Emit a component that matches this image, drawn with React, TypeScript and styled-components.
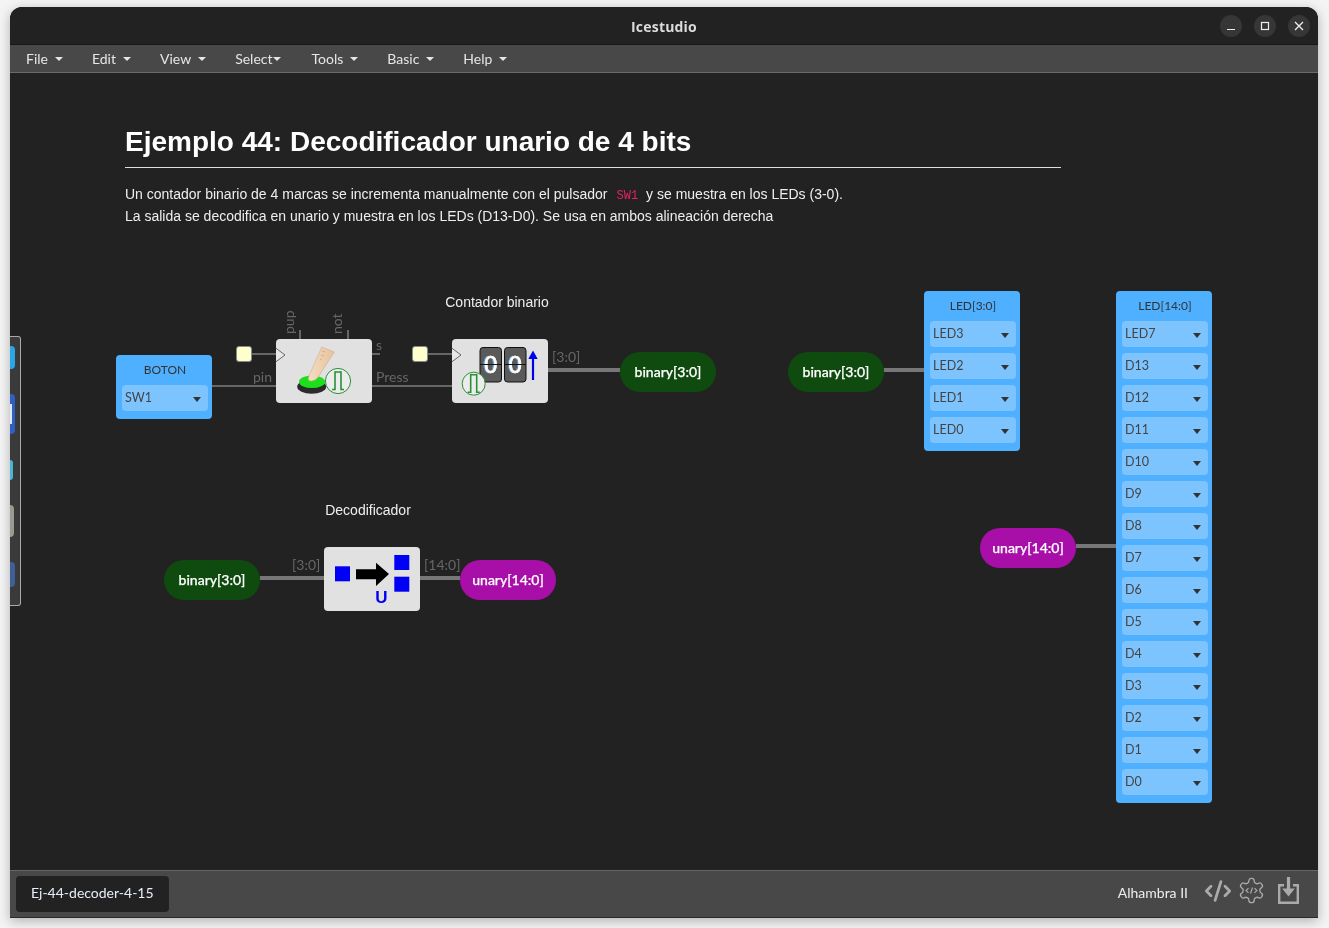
import styled, { createGlobalStyle } from 'styled-components';
import { CodeXml } from 'lucide-react';

const GlobalStyle = createGlobalStyle`
  html, body {
    margin: 0;
    padding: 0;
    background: #f4f4f4;
    overflow: hidden;
  }
  #root {
    width: 1329px;
    height: 928px;
  }
`;

const Win = styled.div`
  position: relative;
  margin: 7px 0 0 10px;
  width: 1308px;
  height: 911px;
  display: flex;
  flex-direction: column;
  background: #222;
  border-radius: 12px 12px 0 0;
  overflow: hidden;
`;

const WinShadow = styled.div`
  padding-top: 0.1px;
  filter: drop-shadow(0 3px 6px rgba(0, 0, 0, 0.28));
`;

const TitleBar = styled.div`
  height: 38px;
  flex-shrink: 0;
  position: relative;
  padding-top: 2px;
  display: flex;
  align-items: center;
  justify-content: center;
  background: #222;
  border-bottom: 1px solid #161616;
  box-sizing: border-box;
  color: #dcdcdc;
  letter-spacing: 0.2px;
  font: 700 14px 'Open Sans', 'Noto Sans', sans-serif;
`;

const WinButtons = styled.div`
  position: absolute;
  right: 8px;
  top: 8px;
  display: flex;
  gap: 12px;
`;

const WinButton = styled.div`
  width: 22px;
  height: 22px;
  border-radius: 50%;
  background: #363636;
  display: flex;
  align-items: center;
  justify-content: center;
`;

const MenuBar = styled.div`
  height: 28px;
  flex-shrink: 0;
  box-sizing: border-box;
  padding: 0 0 1px 16px;
  display: flex;
  align-items: center;
  gap: 29px;
  background: #484848;
  border-bottom: 1px solid #6a6a6a;
  color: #e6e6e6;
  font: 400 14px Lato, sans-serif;
`;

const MenuItem = styled.div<{ $tight?: boolean }>`
  display: flex;
  align-items: center;
  gap: ${(p) => (p.$tight ? '0' : '7px')};
  ${(p) => (p.$tight ? 'margin-right: 2px;' : '')}
`;

const MenuCaret = styled.span`
  width: 0;
  height: 0;
  margin-top: 2px;
  border-left: 4px solid transparent;
  border-right: 4px solid transparent;
  border-top: 4px solid #e6e6e6;
`;

const Canvas = styled.div`
  position: relative;
  flex: 1;
  background: #222;
  overflow: hidden;
`;

const Dock = styled.div`
  position: absolute;
  left: 0;
  top: 263px;
  width: 11px;
  height: 270px;
  box-sizing: border-box;
  padding: 9px 0 18px;
  display: flex;
  flex-direction: column;
  justify-content: space-between;
  background: #3a3a3a;
  border: 1px solid #aaa;
  border-left: none;
  border-radius: 0 3px 3px 0;
`;

const DockItem = styled.div<{ $h: number; $w: number; $bg: string }>`
  width: ${(p) => p.$w}px;
  height: ${(p) => p.$h}px;
  display: flex;
  align-items: center;
  background: ${(p) => p.$bg};
  border-radius: 0 4px 4px 0;
`;

const DockShine = styled.div`
  width: 2px;
  height: 20px;
  background: #dfe6f5;
`;

const Note = styled.div`
  position: absolute;
  left: 115px;
  top: 50px;
  width: 936px;
  color: #eee;
  font: 400 14px/22px 'Liberation Sans', Arial, sans-serif;
`;

const Heading = styled.h1`
  margin: 0 0 15px;
  padding: 1px 0 7px;
  border-bottom: 1px solid #ddd;
  color: #fff;
  font: 700 28px/36px 'Liberation Sans', Arial, sans-serif;
`;

const Para = styled.p`
  margin: 0;
`;

const InlineCode = styled.code`
  padding: 0 8px 0 9px;
  color: #e0245e;
  font: 400 12px 'Liberation Mono', monospace;
`;

const Caption = styled.div<{ $x: number; $y: number }>`
  position: absolute;
  left: ${(p) => p.$x}px;
  top: ${(p) => p.$y}px;
  transform: translateX(-50%);
  color: #eee;
  white-space: nowrap;
  font: 400 14px/18px 'Liberation Sans', Arial, sans-serif;
`;

const Wire = styled.div<{ $x: number; $y: number; $w: number; $thick?: boolean }>`
  position: absolute;
  left: ${(p) => p.$x}px;
  top: ${(p) => p.$y - (p.$thick ? 2 : 1)}px;
  width: ${(p) => p.$w}px;
  height: ${(p) => (p.$thick ? 4 : 2)}px;
  background: ${(p) => (p.$thick ? '#777' : '#666')};
`;

const VWire = styled.div<{ $x: number; $y: number }>`
  position: absolute;
  left: ${(p) => p.$x - 1}px;
  top: ${(p) => p.$y}px;
  width: 2px;
  height: 9px;
  background: #666;
`;

const PortLabel = styled.div<{ $x: number; $y: number; $up?: boolean }>`
  position: absolute;
  left: ${(p) => p.$x}px;
  top: ${(p) => p.$y}px;
  color: #666;
  white-space: nowrap;
  font: 400 14px/16px Lato, sans-serif;
  transform-origin: left top;
  ${(p) => (p.$up ? 'transform: rotate(-90deg);' : '')}
`;

const Pill = styled.div<{ $x: number; $y: number; $bg: string }>`
  position: absolute;
  left: ${(p) => p.$x}px;
  top: ${(p) => p.$y}px;
  width: 96px;
  height: 40px;
  padding-bottom: 1px;
  box-sizing: border-box;
  border-radius: 20px;
  display: flex;
  align-items: center;
  justify-content: center;
  background: ${(p) => p.$bg};
  color: #fff;
  -webkit-text-stroke: 0.25px #fff;
  font: 500 14px Lato, sans-serif;
`;

const Block = styled.div<{ $x: number; $y: number }>`
  position: absolute;
  left: ${(p) => p.$x}px;
  top: ${(p) => p.$y}px;
  width: 96px;
  height: 64px;
  background: #e1e1e1;
  border-radius: 4px;
`;

const BlockArt = styled.svg`
  display: block;
  overflow: visible;
`;

const TileDigit = styled.text`
  fill: #fff;
  stroke: #fff;
  stroke-width: 0.7px;
  font: 400 24px 'Liberation Sans', Arial, sans-serif;
  text-anchor: middle;
  filter: drop-shadow(-0.7px 0 0 #3b8fe0) drop-shadow(0.7px 0 0 #e8963a);
`;

const ConstBox = styled.div<{ $x: number; $y: number }>`
  position: absolute;
  left: ${(p) => p.$x}px;
  top: ${(p) => p.$y}px;
  width: 16px;
  height: 16px;
  box-sizing: border-box;
  background: #ffffcc;
  border: 1px solid #888;
  border-radius: 3px;
`;

const IoBlock = styled.div<{ $x: number; $y: number }>`
  position: absolute;
  left: ${(p) => p.$x}px;
  top: ${(p) => p.$y}px;
  width: 96px;
  box-sizing: border-box;
  padding: 6px 4px 8px 6px;
  display: flex;
  flex-direction: column;
  gap: 6px;
  background: #4fb0ff;
  border-radius: 4px;
  color: #333;
  font: 400 12px Lato, sans-serif;
`;

const IoTitle = styled.div`
  height: 18px;
  line-height: 18px;
  text-align: center;
`;

const PinSelect = styled.div`
  position: relative;
  height: 26px;
  box-sizing: border-box;
  padding: 4px 0 0 3px;
  background: #7dc4ff;
  border-radius: 4px;
  color: #444;
  line-height: 17px;
  font-size: 12.5px;
`;

const PinCaret = styled.span`
  position: absolute;
  right: 7px;
  top: 12px;
  width: 0;
  height: 0;
  border-left: 4px solid transparent;
  border-right: 4px solid transparent;
  border-top: 5px solid #333;
`;

const Footer = styled.div`
  height: 48px;
  flex-shrink: 0;
  box-sizing: border-box;
  padding: 5px 19px 5px 6px;
  display: flex;
  align-items: center;
  justify-content: space-between;
  background: #484848;
  border-top: 1px solid #666;
  border-bottom: 1px solid #2a2a2a;
`;

const FileTab = styled.div`
  height: 36px;
  box-sizing: border-box;
  padding: 0 15px 4px;
  display: flex;
  align-items: center;
  background: #222;
  border-radius: 4px;
  color: #e6eefa;
  font: 400 14px Lato, sans-serif;
`;

const FooterRight = styled.div`
  display: flex;
  align-items: center;
  margin-top: -7px;
  color: #eee;
  font: 400 14px Lato, sans-serif;
`;

const BoardName = styled.span`
  margin: 4px 16px 0 0;
`;

const FooterIcons = styled.div`
  display: flex;
  align-items: center;
  gap: 5px;
  color: #aaa;
`;

const SaveIcon = styled.svg`
  margin-left: 7px;
`;

const GEAR =
  'M12.22 2h-.44a2 2 0 0 0-2 2v.18a2 2 0 0 1-1 1.73l-.43.25a2 2 0 0 1-2 0l-.15-.08a2 2 0 0 0-2.73.73l-.22.38a2 2 0 0 0 .73 2.73l.15.1a2 2 0 0 1 1 1.72v.51a2 2 0 0 1-1 1.74l-.15.09a2 2 0 0 0-.73 2.73l.22.38a2 2 0 0 0 2.73.73l.15-.08a2 2 0 0 1 2 0l.43.25a2 2 0 0 1 1 1.73V20a2 2 0 0 0 2 2h.44a2 2 0 0 0 2-2v-.18a2 2 0 0 1 1-1.73l.43-.25a2 2 0 0 1 2 0l.15.08a2 2 0 0 0 2.73-.73l.22-.39a2 2 0 0 0-.73-2.73l-.15-.08a2 2 0 0 1-1-1.74v-.5a2 2 0 0 1 1-1.74l.15-.09a2 2 0 0 0 .73-2.73l-.22-.38a2 2 0 0 0-2.73-.73l-.15.08a2 2 0 0 1-2 0l-.43-.25a2 2 0 0 1-1-1.73V4a2 2 0 0 0-2-2z';

const GREEN = '#0f4a0f';
const PURPLE = '#a80ea8';
const TOP = 73;

const menus = ['File', 'Edit', 'View', 'Select', 'Tools', 'Basic', 'Help'];
const ledPins = ['LED3', 'LED2', 'LED1', 'LED0'];
const unaryPins = ['LED7', 'D13', 'D12', 'D11', 'D10', 'D9', 'D8', 'D7', 'D6', 'D5', 'D4', 'D3', 'D2', 'D1', 'D0'];

function Pulse({ cx, cy, r }: { cx: number; cy: number; r: number }) {
  return (
    <g fill="none" stroke="#2a9038">
      <circle cx={cx} cy={cy} r={r} fill="#ececec" strokeWidth={1} />
      <path
        d={`M${cx - 6} ${cy + 8.5}H${cx - 3}V${cy - 9}H${cx + 3}V${cy + 8.5}H${cx + 6}`}
        strokeWidth={1.6}
      />
    </g>
  );
}

function ClockMark() {
  return <path d="M0 9.3 L9 16 L0 22.7" fill="#e8e8e8" stroke="#666" strokeWidth={1} />;
}

function ButtonArt() {
  return (
    <BlockArt width={96} height={64} viewBox="0 0 96 64">
      <defs>
        <linearGradient id="finger" x1="0" y1="0" x2="1" y2="0">
          <stop offset="0" stopColor="#f5dcc2" />
          <stop offset="1" stopColor="#e8c29c" />
        </linearGradient>
      </defs>
      <ClockMark />
      <ellipse cx={35.7} cy={47.7} rx={14.5} ry={7} fill="#2b2b2b" />
      <ellipse cx={36} cy={42.7} rx={13} ry={6.3} fill="#1be01b" />
      <path
        d="M45.7 8 L58.3 13 L41.5 39 Q37 43.5 33 41.5 Q31.5 40 33 37 Z"
        fill="url(#finger)"
        stroke="#c9a585"
        strokeWidth={0.5}
      />
      <path d="M46 12 L49 13 M45 16 L48 17 M44 20 L46 21" stroke="#b89878" strokeWidth={0.6} />
      <Pulse cx={62} cy={42} r={12.6} />
    </BlockArt>
  );
}

function Tile({ x }: { x: number }) {
  return (
    <g>
      <rect x={x} y={8.5} width={21.5} height={34.5} rx={3} fill="#5a5a5a" stroke="#111" strokeWidth={1} />
      <TileDigit x={x + 10.7} y={34}>0</TileDigit>
      <line x1={x} x2={x + 21.5} y1={25.5} y2={25.5} stroke="#111" strokeWidth={1} />
    </g>
  );
}

function CounterArt() {
  return (
    <BlockArt width={96} height={64} viewBox="0 0 96 64">
      <ClockMark />
      <Tile x={28} />
      <Tile x={52.5} />
      <path d="M81 18V41" stroke="#0000ee" strokeWidth={2.2} />
      <path d="M76.3 20 L81 11.5 L85.7 20 Z" fill="#0000ee" />
      <Pulse cx={21.7} cy={44.7} r={11.5} />
    </BlockArt>
  );
}

function DecoderArt() {
  return (
    <BlockArt width={96} height={64} viewBox="0 0 96 64">
      <rect x={11} y={19.3} width={15} height={15} fill="#0000f5" />
      <path d="M32 22.3H52V15.7L65 27L52 39V32.3H32Z" fill="#000" />
      <rect x={70.3} y={8} width={15} height={15} fill="#0000f5" />
      <rect x={70.3} y={29.7} width={15} height={15} fill="#0000f5" />
      <text
        x={57.3}
        y={55.5}
        textAnchor="middle"
        fill="#0000f5"
        fontFamily="'Liberation Sans', Arial, sans-serif"
        fontWeight={700}
        fontSize={17}
      >
        U
      </text>
    </BlockArt>
  );
}

function Pin({ name }: { name: string }) {
  return (
    <PinSelect>
      {name}
      <PinCaret />
    </PinSelect>
  );
}

function GearCode() {
  return (
    <svg width={29} height={29} viewBox="0 0 24 24" fill="none" stroke="currentColor" strokeWidth={1.1}>
      <path d={GEAR} />
      <path d="M9.5 10 L7.5 12 L9.5 14 M14.5 10 L16.5 12 L14.5 14 M12.8 9.5 L11.2 14.5" strokeWidth={1} />
    </svg>
  );
}

function SaveBox() {
  return (
    <SaveIcon width={21} height={27} viewBox="0 0 21 27" fill="none" stroke="currentColor" strokeWidth={2.4}>
      <path d="M6 8.2H1.2V25.8H19.8V8.2H15" />
      <path d="M10.5 0V14" strokeWidth={3.2} />
      <path d="M4.2 11.5H16.8L10.5 19.5Z" fill="currentColor" stroke="none" />
    </SaveIcon>
  );
}

export default function App() {
  return (
    <>
      <GlobalStyle />
      <WinShadow>
        <Win>
          <TitleBar>
            Icestudio
            <WinButtons>
              <WinButton>
                <svg width={10} height={10} viewBox="0 0 10 10">
                  <path d="M1 8.5H9" stroke="#eee" strokeWidth={1.2} />
                </svg>
              </WinButton>
              <WinButton>
                <svg width={10} height={10} viewBox="0 0 10 10">
                  <rect x={1.5} y={1.5} width={7} height={7} fill="none" stroke="#eee" strokeWidth={1.2} />
                </svg>
              </WinButton>
              <WinButton>
                <svg width={10} height={10} viewBox="0 0 10 10">
                  <path d="M1 1L9 9M9 1L1 9" stroke="#eee" strokeWidth={1.3} />
                </svg>
              </WinButton>
            </WinButtons>
          </TitleBar>

          <MenuBar>
            {menus.map((m) => (
              <MenuItem key={m} $tight={m === 'Select'}>
                {m}
                <MenuCaret />
              </MenuItem>
            ))}
          </MenuBar>

          <Canvas>
            <Dock>
              <DockItem $w={5} $h={23} $bg="#29a6e6" />
              <DockItem $w={5} $h={40} $bg="#2f5fc0">
                <DockShine />
              </DockItem>
              <DockItem $w={3} $h={20} $bg="#49b6d6" />
              <DockItem $w={4} $h={32} $bg="#9a9a90" />
              <DockItem $w={5} $h={25} $bg="#3f5f96" />
            </Dock>

            <Note>
              <Heading>Ejemplo 44: Decodificador unario de 4 bits</Heading>
              <Para>
                Un contador binario de 4 marcas se incrementa manualmente con el pulsador
                <InlineCode>SW1</InlineCode>y se muestra en los LEDs (3-0).
              </Para>
              <Para>
                La salida se decodifica en unario y muestra en los LEDs (D13-D0). Se usa en ambos
                alineación derecha
              </Para>
            </Note>

            <Caption $x={487} $y={220}>Contador binario</Caption>
            <Caption $x={358} $y={428}>Decodificador</Caption>

            <Wire $x={202} $y={386 - TOP} $w={64} />
            <Wire $x={242} $y={354 - TOP} $w={24} />
            <Wire $x={362} $y={386 - TOP} $w={80} />
            <Wire $x={362} $y={354 - TOP} $w={8} />
            <Wire $x={418} $y={354 - TOP} $w={24} />
            <Wire $x={538} $y={370 - TOP} $w={72} $thick />
            <Wire $x={874} $y={370 - TOP} $w={40} $thick />
            <Wire $x={1066} $y={546 - TOP} $w={40} $thick />
            <Wire $x={250} $y={578 - TOP} $w={64} $thick />
            <Wire $x={410} $y={578 - TOP} $w={40} $thick />
            <VWire $x={290} $y={257} />
            <VWire $x={338} $y={257} />

            <PortLabel $x={243} $y={296}>pin</PortLabel>
            <PortLabel $x={366} $y={296}>Press</PortLabel>
            <PortLabel $x={366} $y={264}>s</PortLabel>
            <PortLabel $x={271} $y={261} $up>pup</PortLabel>
            <PortLabel $x={319} $y={261} $up>not</PortLabel>
            <PortLabel $x={542} $y={276}>[3:0]</PortLabel>
            <PortLabel $x={282} $y={484}>[3:0]</PortLabel>
            <PortLabel $x={414} $y={484}>[14:0]</PortLabel>

            <IoBlock $x={106} $y={282}>
              <IoTitle>BOTON</IoTitle>
              <Pin name="SW1" />
            </IoBlock>

            <ConstBox $x={226} $y={273} />
            <ConstBox $x={402} $y={273} />

            <Block $x={266} $y={266}>
              <ButtonArt />
            </Block>
            <Block $x={442} $y={266}>
              <CounterArt />
            </Block>
            <Block $x={314} $y={474}>
              <DecoderArt />
            </Block>

            <Pill $x={610} $y={279} $bg={GREEN}>binary[3:0]</Pill>
            <Pill $x={778} $y={279} $bg={GREEN}>binary[3:0]</Pill>
            <Pill $x={154} $y={487} $bg={GREEN}>binary[3:0]</Pill>
            <Pill $x={450} $y={487} $bg={PURPLE}>unary[14:0]</Pill>
            <Pill $x={970} $y={455} $bg={PURPLE}>unary[14:0]</Pill>

            <IoBlock $x={914} $y={218}>
              <IoTitle>LED[3:0]</IoTitle>
              {ledPins.map((p) => (
                <Pin key={p} name={p} />
              ))}
            </IoBlock>
            <IoBlock $x={1106} $y={218}>
              <IoTitle>LED[14:0]</IoTitle>
              {unaryPins.map((p) => (
                <Pin key={p} name={p} />
              ))}
            </IoBlock>
          </Canvas>

          <Footer>
            <FileTab>Ej-44-decoder-4-15</FileTab>
            <FooterRight>
              <BoardName>Alhambra II</BoardName>
              <FooterIcons>
                <CodeXml size={28} strokeWidth={2.4} />
                <GearCode />
                <SaveBox />
              </FooterIcons>
            </FooterRight>
          </Footer>
        </Win>
      </WinShadow>
    </>
  );
}
